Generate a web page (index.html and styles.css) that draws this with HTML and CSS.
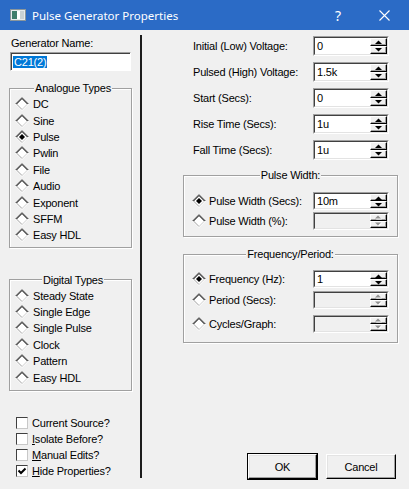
FILE: index.html
```html
<!DOCTYPE html>
<html>
<head>
<meta charset="utf-8">
<link rel="stylesheet" href="styles.css">
</head>
<body>
<div class="window">
  <div class="titlebar">
    <svg class="app-icon" width="16" height="12" viewBox="0 0 16 12">
      <rect x="0.5" y="0.5" width="15" height="11" fill="#e6eaec" stroke="#8a969c"/>
      <rect x="2" y="2" width="5" height="8" fill="#3f7d6c"/>
      <rect x="7" y="2" width="3" height="8" fill="#ffffff"/>
      <rect x="10" y="2" width="4" height="8" fill="#c9d1d4"/>
    </svg>
    <span class="title">Pulse Generator Properties</span>
    <span class="help">?</span>
    <svg class="close" width="11" height="11" viewBox="0 0 11 11">
      <path d="M0.5 0.5 L10.5 10.5 M10.5 0.5 L0.5 10.5" stroke="#fff" stroke-width="1.1"/>
    </svg>
  </div>
  <div class="content">
    <div class="left">
      <div class="name-label">Generator Name:</div>
      <div class="name-input"><span class="sel">C21(2)</span></div>
      <fieldset class="group analogue">
        <legend>Analogue Types</legend>
        <div class="radio"><svg class="rd" viewBox="0 0 14 14"><use href="#rd"/></svg><span>DC</span></div>
        <div class="radio"><svg class="rd" viewBox="0 0 14 14"><use href="#rd"/></svg><span>Sine</span></div>
        <div class="radio"><svg class="rd" viewBox="0 0 14 14"><use href="#rdon"/></svg><span>Pulse</span></div>
        <div class="radio"><svg class="rd" viewBox="0 0 14 14"><use href="#rd"/></svg><span>Pwlin</span></div>
        <div class="radio"><svg class="rd" viewBox="0 0 14 14"><use href="#rd"/></svg><span>File</span></div>
        <div class="radio"><svg class="rd" viewBox="0 0 14 14"><use href="#rd"/></svg><span>Audio</span></div>
        <div class="radio"><svg class="rd" viewBox="0 0 14 14"><use href="#rd"/></svg><span>Exponent</span></div>
        <div class="radio"><svg class="rd" viewBox="0 0 14 14"><use href="#rd"/></svg><span>SFFM</span></div>
        <div class="radio"><svg class="rd" viewBox="0 0 14 14"><use href="#rd"/></svg><span>Easy HDL</span></div>
      </fieldset>
      <fieldset class="group digital">
        <legend>Digital Types</legend>
        <div class="radio"><svg class="rd" viewBox="0 0 14 14"><use href="#rd"/></svg><span>Steady State</span></div>
        <div class="radio"><svg class="rd" viewBox="0 0 14 14"><use href="#rd"/></svg><span>Single Edge</span></div>
        <div class="radio"><svg class="rd" viewBox="0 0 14 14"><use href="#rd"/></svg><span>Single Pulse</span></div>
        <div class="radio"><svg class="rd" viewBox="0 0 14 14"><use href="#rd"/></svg><span>Clock</span></div>
        <div class="radio"><svg class="rd" viewBox="0 0 14 14"><use href="#rd"/></svg><span>Pattern</span></div>
        <div class="radio"><svg class="rd" viewBox="0 0 14 14"><use href="#rd"/></svg><span>Easy HDL</span></div>
      </fieldset>
      <div class="checks">
        <div class="check"><span class="box"></span><span>Current Source?</span></div>
        <div class="check"><span class="box"></span><span><u>I</u>solate Before?</span></div>
        <div class="check"><span class="box"></span><span><u>M</u>anual Edits?</span></div>
        <div class="check"><span class="box"><svg class="tick" width="10" height="10" viewBox="0 0 10 10"><path d="M1.5 4.5 L4 7 L8.5 2.5" fill="none" stroke="#000" stroke-width="2"/></svg></span><span><u>H</u>ide Properties?</span></div>
      </div>
    </div>
    <div class="divider"></div>
    <div class="right">
      <div class="field-row">
        <span class="flabel">Initial (Low) Voltage:</span>
        <div class="spin-field"><div class="spin-inner"><span class="spin-text">0</span><span class="spinner"><span class="sbtn"><svg class="arr" viewBox="0 0 7 4"><use href="#up"/></svg></span><span class="sbtn"><svg class="arr" viewBox="0 0 7 4"><use href="#down"/></svg></span></span></div></div>
      </div>
      <div class="field-row">
        <span class="flabel">Pulsed (High) Voltage:</span>
        <div class="spin-field"><div class="spin-inner"><span class="spin-text">1.5k</span><span class="spinner"><span class="sbtn"><svg class="arr" viewBox="0 0 7 4"><use href="#up"/></svg></span><span class="sbtn"><svg class="arr" viewBox="0 0 7 4"><use href="#down"/></svg></span></span></div></div>
      </div>
      <div class="field-row">
        <span class="flabel">Start (Secs):</span>
        <div class="spin-field"><div class="spin-inner"><span class="spin-text">0</span><span class="spinner"><span class="sbtn"><svg class="arr" viewBox="0 0 7 4"><use href="#up"/></svg></span><span class="sbtn"><svg class="arr" viewBox="0 0 7 4"><use href="#down"/></svg></span></span></div></div>
      </div>
      <div class="field-row">
        <span class="flabel">Rise Time (Secs):</span>
        <div class="spin-field"><div class="spin-inner"><span class="spin-text">1u</span><span class="spinner"><span class="sbtn"><svg class="arr" viewBox="0 0 7 4"><use href="#up"/></svg></span><span class="sbtn"><svg class="arr" viewBox="0 0 7 4"><use href="#down"/></svg></span></span></div></div>
      </div>
      <div class="field-row">
        <span class="flabel">Fall Time (Secs):</span>
        <div class="spin-field"><div class="spin-inner"><span class="spin-text">1u</span><span class="spinner"><span class="sbtn"><svg class="arr" viewBox="0 0 7 4"><use href="#up"/></svg></span><span class="sbtn"><svg class="arr" viewBox="0 0 7 4"><use href="#down"/></svg></span></span></div></div>
      </div>

      <fieldset class="group pw">
        <legend>Pulse Width:</legend>
        <div class="grow">
          <svg class="rd" viewBox="0 0 14 14"><use href="#rdon"/></svg><span class="glabel">Pulse Width (Secs):</span>
          <div class="spin-field small"><div class="spin-inner"><span class="spin-text">10m</span><span class="spinner"><span class="sbtn"><svg class="arr" viewBox="0 0 7 4"><use href="#up"/></svg></span><span class="sbtn"><svg class="arr" viewBox="0 0 7 4"><use href="#down"/></svg></span></span></div></div>
        </div>
        <div class="grow">
          <svg class="rd" viewBox="0 0 14 14"><use href="#rd"/></svg><span class="glabel">Pulse Width (%):</span>
          <div class="spin-field small disabled"><div class="spin-inner"><span class="spin-text"></span><span class="spinner"><span class="sbtn"><svg class="arr" viewBox="0 0 7 5"><use href="#upd"/></svg></span><span class="sbtn"><svg class="arr" viewBox="0 0 7 5"><use href="#downd"/></svg></span></span></div></div>
        </div>
      </fieldset>

      <fieldset class="group fp">
        <legend>Frequency/Period:</legend>
        <div class="grow">
          <svg class="rd" viewBox="0 0 14 14"><use href="#rdon"/></svg><span class="glabel">Frequency (Hz):</span>
          <div class="spin-field small"><div class="spin-inner"><span class="spin-text">1</span><span class="spinner"><span class="sbtn"><svg class="arr" viewBox="0 0 7 4"><use href="#up"/></svg></span><span class="sbtn"><svg class="arr" viewBox="0 0 7 4"><use href="#down"/></svg></span></span></div></div>
        </div>
        <div class="grow">
          <svg class="rd" viewBox="0 0 14 14"><use href="#rd"/></svg><span class="glabel">Period (Secs):</span>
          <div class="spin-field small disabled"><div class="spin-inner"><span class="spin-text"></span><span class="spinner"><span class="sbtn"><svg class="arr" viewBox="0 0 7 5"><use href="#upd"/></svg></span><span class="sbtn"><svg class="arr" viewBox="0 0 7 5"><use href="#downd"/></svg></span></span></div></div>
        </div>
        <div class="grow third">
          <svg class="rd" viewBox="0 0 14 14"><use href="#rd"/></svg><span class="glabel">Cycles/Graph:</span>
          <div class="spin-field small disabled"><div class="spin-inner"><span class="spin-text"></span><span class="spinner"><span class="sbtn"><svg class="arr" viewBox="0 0 7 5"><use href="#upd"/></svg></span><span class="sbtn"><svg class="arr" viewBox="0 0 7 5"><use href="#downd"/></svg></span></span></div></div>
        </div>
      </fieldset>

      <div class="buttons">
        <div class="btn-default"><div class="btn">OK</div></div>
        <div class="btn">Cancel</div>
      </div>
    </div>
  </div>
</div>
<svg class="defs" width="0" height="0">
  <defs>
    <g id="rd">
      <polygon points="7,1 13,7 7,13 1,7" fill="#fff"/>
      <path d="M0.5 7 L7 0.5 L13.5 7" fill="none" stroke="#707070"/>
      <path d="M1.5 7 L7 1.5 L12.5 7" fill="none" stroke="#000"/>
      <path d="M0.5 7 L7 13.5 L13.5 7" fill="none" stroke="#ffffff"/>
      <path d="M1.5 7 L7 12.5" fill="none" stroke="#a0a0a0"/>
      <path d="M7 12.5 L12.5 7" fill="none" stroke="#d0d0d0"/>
    </g>
    <g id="rdon">
      <use href="#rd"/>
      <polygon points="7,4 10,7 7,10 4,7" fill="#000"/>
    </g>
    <polygon id="up" points="0,4 3.5,0.5 7,4" fill="#000"/>
    <polygon id="down" points="0,0 3.5,3.5 7,0" fill="#000"/>
    <g id="upd">
      <polygon points="1,4.5 4,1.5 7,4.5" fill="#fff"/>
      <polygon points="0,3.5 3,0.5 6,3.5" fill="#909090"/>
    </g>
    <g id="downd">
      <polygon points="1,1.5 4,4.5 7,1.5" fill="#fff"/>
      <polygon points="0,0.5 3,3.5 6,0.5" fill="#909090"/>
    </g>
  </defs>
</svg>
</body>
</html>
```
FILE: styles.css
```css
html, body {
  margin: 0;
  padding: 0;
  background: #f0f0f0;
}
body {
  font-family: "Liberation Sans", Arial, sans-serif;
  font-size: 11px;
  letter-spacing: -0.2px;
  color: #000;
}
.window {
  width: 409px;
  height: 489px;
  background: #f0f0f0;
  display: flex;
  flex-direction: column;
  overflow: hidden;
}
.titlebar {
  flex: none;
  height: 30px;
  background: #2b6bc6;
  color: #fff;
  display: flex;
  align-items: center;
}
.app-icon {
  margin-left: 10px;
  flex: none;
}
.title {
  margin-left: 6px;
  flex: 1;
  font-family: "Noto Sans", "Open Sans", sans-serif;
  font-size: 11.5px;
  letter-spacing: 0;
}
.help {
  width: 8px;
  text-align: center;
  font-family: "Noto Sans", sans-serif;
  font-size: 14px;
  letter-spacing: 0;
}
.close {
  margin-left: 37px;
  margin-right: 19px;
  flex: none;
}
.content {
  flex: 1;
  display: flex;
  min-height: 0;
}
.left {
  width: 140px;
  flex: none;
  box-sizing: border-box;
  padding: 7px 0 0 9px;
  display: flex;
  flex-direction: column;
}
.name-label {
  line-height: 12px;
  margin-left: 2px;
}
.name-input {
  margin-top: 3px;
  margin-left: 1px;
  width: 121px;
  height: 19px;
  box-sizing: border-box;
  background: #fff;
  border: 1px solid;
  border-color: #a0a0a0 #fff #fff #a0a0a0;
  box-shadow: inset 1px 1px #404040;
  display: flex;
  align-items: center;
  padding-left: 2px;
}
.sel {
  background: #0078d7;
  color: #fff;
  line-height: 12px;
  padding: 0 1px;
}
.group {
  margin: 0;
  box-sizing: border-box;
  min-inline-size: 0;
  border: 1px solid #a0a0a0;
  box-shadow: inset 1px 1px #fff, 1px 1px #fff;
}
.group legend {
  margin: 0 auto;
  padding: 0 1px;
  line-height: 12px;
  background: #f0f0f0;
}
.analogue {
  width: 123px;
  margin-top: 11px;
  padding: 2px 0 3px 5px;
}
.digital {
  width: 123px;
  margin-top: 26px;
  padding: 2px 0 4px 5px;
}
.radio {
  height: 16.4px;
  display: flex;
  align-items: center;
}
.rd {
  width: 14px;
  height: 14px;
  flex: none;
  margin-right: 4px;
}
.checks {
  margin-top: 24px;
  margin-left: 7px;
}
.check {
  height: 16px;
  display: flex;
  align-items: center;
}
.box {
  width: 12px;
  height: 12px;
  box-sizing: border-box;
  background: #fff;
  border: 1px solid;
  border-color: #404040 #c8c8c8 #c8c8c8 #404040;
  margin-right: 4px;
  display: flex;
  align-items: center;
  justify-content: center;
}
.tick {
  flex: none;
}
.divider {
  width: 2px;
  flex: none;
  background: #1c1c1c;
  margin: 5px 0 11px;
}
.right {
  flex: 1;
  box-sizing: border-box;
  padding: 6px 11px 9px 41px;
  display: flex;
  flex-direction: column;
}
.field-row {
  height: 20px;
  display: flex;
  align-items: center;
  padding: 0 9px 0 10px;
  margin-bottom: 6px;
}
.field-row:nth-child(5) {
  margin-bottom: 0;
}
.flabel {
  flex: 1;
}
.spin-field {
  width: 76px;
  height: 20px;
  flex: none;
  box-sizing: border-box;
  border: 1px solid;
  border-color: #a0a0a0 #fff #fff #a0a0a0;
}
.spin-field.small {
  height: 18px;
}
.spin-inner {
  height: 100%;
  box-sizing: border-box;
  border: 1px solid;
  border-color: #404040 #e3e3e3 #e3e3e3 #404040;
  display: flex;
  background: #fff;
}
.disabled .spin-inner {
  background: #f0f0f0;
}
.spin-text {
  flex: 1;
  padding-left: 2px;
  display: flex;
  align-items: center;
}
.spinner {
  width: 17px;
  display: flex;
  flex-direction: column;
}
.sbtn {
  flex: 1;
  box-sizing: border-box;
  background: #f0f0f0;
  border: 1px solid;
  border-color: #fff #000 #000 #fff;
  box-shadow: inset -1px -1px #a0a0a0;
  display: flex;
  align-items: center;
  justify-content: center;
}
.arr {
  width: 7px;
  height: 4px;
}
.disabled .arr {
  height: 5px;
}
.pw {
  margin-top: 9px;
  padding: 11px 8px 6px 8px;
}
.fp {
  margin-top: 11px;
  padding: 10px 8px 9px 8px;
}
.grow {
  height: 18px;
  display: flex;
  align-items: center;
}
.grow + .grow {
  margin-top: 2px;
}
.fp .grow + .grow {
  margin-top: 3px;
}
.fp .grow.third {
  margin-top: 6px;
}
.rd + .glabel {
  margin-left: -1px;
}
.glabel {
  flex: 1;
}
.buttons {
  margin-top: auto;
  display: flex;
  justify-content: flex-end;
  align-items: center;
  gap: 8px;
  padding-right: 2px;
}
.btn-default {
  border: 1px solid #000;
}
.btn {
  width: 70px;
  height: 25px;
  box-sizing: border-box;
  border: 1px solid;
  border-color: #fff #000 #000 #fff;
  box-shadow: inset -1px -1px #a0a0a0, inset 1px 1px #e3e3e3;
  background: #f0f0f0;
  display: flex;
  align-items: center;
  justify-content: center;
}
.btn-default .btn {
  width: 69px;
}
.defs {
  display: block;
  width: 0;
  height: 0;
  overflow: hidden;
}
```
